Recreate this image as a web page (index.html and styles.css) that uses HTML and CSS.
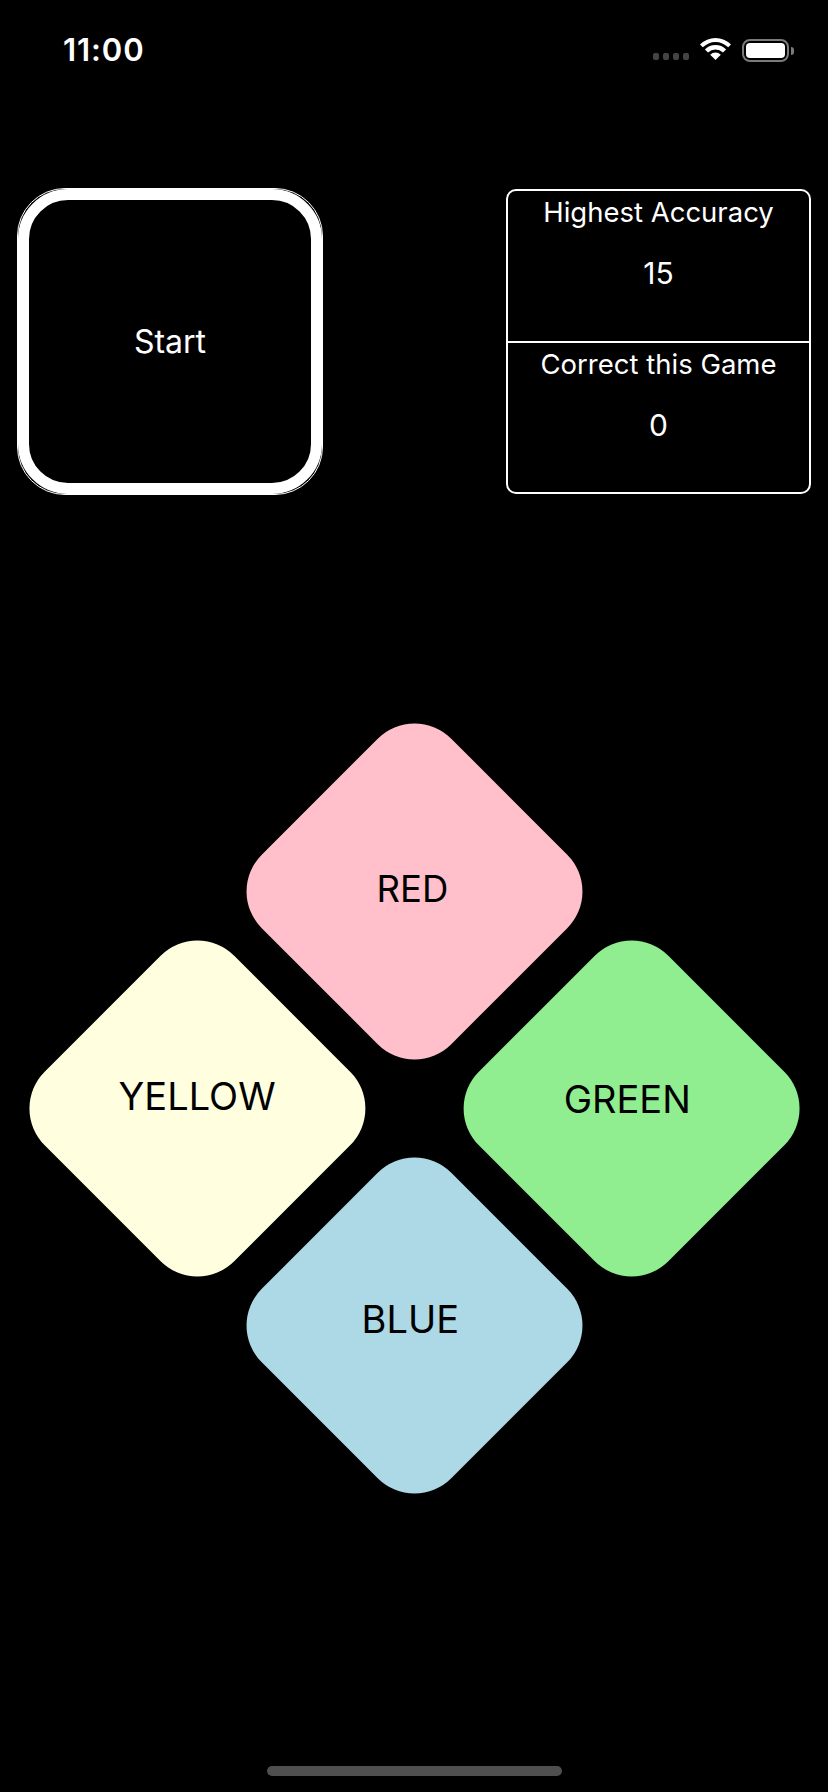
FILE: index.html
```html
<!DOCTYPE html>
<html lang="en">
<head>
<meta charset="utf-8">
<title>Color Game</title>
<link rel="stylesheet" href="styles.css">
</head>
<body>
<div class="screen">
  <header class="statusbar">
    <span class="time">11:00</span>
    <div class="status-icons">
      <div class="signal"><i></i><i></i><i></i><i></i></div>
      <svg class="wifi" width="31" height="23" viewBox="0 0 31 23">
        <path d="M15.5 23 L10.2 17.7 A7.5 7.5 0 0 1 20.8 17.7 Z" fill="#fff"/>
        <path d="M4.9 12.4 A15 15 0 0 1 26.1 12.4 L22.9 15.6 A10.5 10.5 0 0 0 8.1 15.6 Z" fill="#fff"/>
        <path d="M0 7.4 A22 22 0 0 1 31 7.4 L28.2 10.3 A18 18 0 0 0 2.8 10.3 Z" fill="#fff"/>
      </svg>
      <div class="battery"><div class="battery-body"><div class="battery-fill"></div></div><div class="battery-cap"></div></div>
    </div>
  </header>

  <section class="top-row">
    <div class="start">
      <div class="start-inner"><span>Start</span></div>
    </div>
    <div class="scores">
      <div class="score-cell">
        <div class="score-label">Highest Accuracy</div>
        <div class="score-value">15</div>
      </div>
      <div class="score-cell">
        <div class="score-label">Correct this Game</div>
        <div class="score-value">0</div>
      </div>
    </div>
  </section>

  <section class="pad-area">
    <div class="pad">
      <div class="pad-btn pad-red"><span class="pad-label">RED</span></div>
      <div class="pad-btn pad-green"><span class="pad-label">GREEN</span></div>
      <div class="pad-btn pad-yellow"><span class="pad-label">YELLOW</span></div>
      <div class="pad-btn pad-blue"><span class="pad-label">BLUE</span></div>
    </div>
  </section>

  <div class="home-indicator"></div>
</div>
</body>
</html>
```

FILE: styles.css
```css
* { box-sizing: border-box; }

html, body {
  margin: 0;
  padding: 0;
  background: #000;
}

body {
  font-family: Inter, "Noto Sans", "Liberation Sans", sans-serif;
  color: #fff;
}

.screen {
  width: 828px;
  height: 1792px;
  display: flex;
  flex-direction: column;
  overflow: hidden;
}

/* Status bar */
.statusbar {
  height: 99px;
  display: flex;
  align-items: center;
  justify-content: space-between;
  padding: 0 34px 0 63px;
}

.time {
  font-size: 31px;
  font-weight: 600;
  line-height: 31px;
  letter-spacing: 0.9px;
}

.status-icons {
  display: flex;
  align-items: center;
}

.signal {
  display: flex;
  gap: 4px;
  margin-top: 14px;
  margin-right: 11px;
}

.signal i {
  display: block;
  width: 6px;
  height: 7px;
  border-radius: 2px;
  background: #444;
}

.wifi {
  display: block;
  margin-right: 11px;
  margin-top: -2px;
}

.battery {
  display: flex;
  align-items: center;
  margin-top: 2px;
}

.battery-body {
  width: 47px;
  height: 23px;
  border: 2px solid #7a7a7a;
  border-radius: 8px;
  padding: 2px;
}

.battery-fill {
  width: 100%;
  height: 100%;
  background: #fff;
  border-radius: 4px;
}

.battery-cap {
  width: 3px;
  height: 8px;
  margin-left: 2px;
  background: #7a7a7a;
  border-radius: 0 3px 3px 0;
}

/* Top row */
.top-row {
  display: flex;
  justify-content: space-between;
  align-items: flex-start;
  padding: 0 17px;
  margin-top: 89px;
}

.start {
  width: 306px;
  height: 307px;
  border: 1px solid #fff;
  border-radius: 48px;
  display: flex;
}

.start-inner {
  flex: 1;
  border: 11px solid #fff;
  border-radius: 50px;
  display: flex;
  align-items: center;
  justify-content: center;
}

.start-inner span {
  font-size: 32px;
  line-height: 40px;
  color: #fff;
}

.scores {
  width: 305px;
  height: 305px;
  margin-top: 1px;
  border: 2px solid #fff;
  border-radius: 10px;
  display: flex;
  flex-direction: column;
}

.score-cell {
  flex: 1;
  display: flex;
  flex-direction: column;
  align-items: center;
  padding-top: 4px;
}

.score-cell + .score-cell {
  border-top: 2px solid #fff;
}

.score-label {
  font-size: 27.5px;
  line-height: 34px;
}

.score-value {
  font-size: 30px;
  line-height: 36px;
  margin-top: 26px;
}

/* Colour pad */
.pad-area {
  display: flex;
  justify-content: center;
  margin-top: 326px;
}

.pad {
  display: grid;
  grid-template-columns: 268px 268px;
  grid-template-rows: 268px 268px;
  gap: 39px;
  transform: rotate(45deg);
}

.pad-btn {
  border-radius: 52px;
  display: flex;
  align-items: center;
  justify-content: center;
}

.pad-label {
  display: block;
  font-size: 38px;
  line-height: 46px;
  color: #000;
  white-space: nowrap;
  transform: rotate(-45deg);
}

.pad-red { background: #ffc0cb; }
.pad-green { background: #90ee90; }
.pad-yellow { background: #ffffe0; }
.pad-blue { background: #add8e6; }

.pad-red .pad-label { font-size: 36.5px; transform: rotate(-45deg) translate(-2px, -2px); }
.pad-green .pad-label { transform: rotate(-45deg) translate(-4px, -9px); }
.pad-yellow .pad-label { transform: rotate(-45deg) translate(0, -12px); }
.pad-blue .pad-label { transform: rotate(-45deg) translate(-4px, -6px); }

/* Home indicator */
.home-indicator {
  margin-top: auto;
  margin-bottom: 16px;
  align-self: center;
  width: 295px;
  height: 10px;
  border-radius: 5px;
  background: #4f4f4f;
}
```
